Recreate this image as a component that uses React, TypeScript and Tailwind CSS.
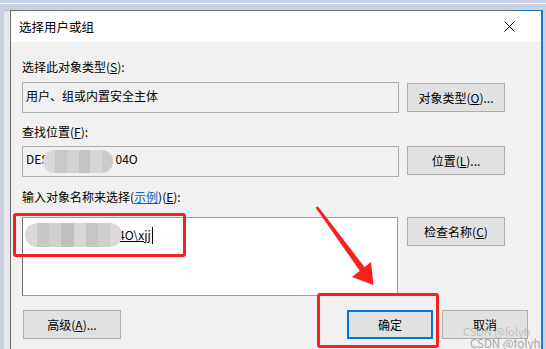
import React from "react";

const shades1 = ["#d8d8d8", "#c9c9c9", "#d2d2d2", "#c4c4c4", "#d6d6d6", "#cbcbcb"];
const shades2 = ["#d9d9d9", "#c8c8c8", "#d0d0d0", "#bfbfbf", "#d7d7d7", "#c5c5c5", "#cfcfcf", "#dadada"];

function Blur1() {
  return (
    <div className="flex h-[23px] w-[70px] overflow-hidden rounded-full blur-[0.6px]">
      {shades1.map((c, i) => (
        <div key={i} className="h-full flex-1" style={{ background: c }} />
      ))}
    </div>
  );
}

function Blur2() {
  return (
    <div className="flex h-[24px] w-[97px] overflow-hidden rounded-full blur-[0.6px]">
      {shades2.map((c, i) => (
        <div key={i} className="h-full flex-1" style={{ background: c }} />
      ))}
    </div>
  );
}

function Btn({ children, className = "" }: { children: React.ReactNode; className?: string }) {
  return (
    <div
      className={
        "flex h-[29px] items-center justify-center border border-[#adadad] bg-[#e1e1e1] text-[12px] text-black " +
        className
      }
    >
      {children}
    </div>
  );
}

export default function App() {
  return (
    <div className="relative h-[349px] w-[546px] overflow-hidden bg-[#c9d2e2] font-['Noto_Sans_CJK_SC','Microsoft_YaHei',sans-serif] text-[12px] leading-[16px] text-black">
      <div className="h-[3px]" />
      <div className="h-px bg-[#eef1f7]" />
      <div className="h-[6px]" />
      <div className="flex h-[339px]">
        <div className="w-[4px]" />
        <div className="w-[6px] border-t border-[#b4b8c0] bg-[#e6e7ea]" />
        <div className="relative flex w-[533px] flex-col border-l border-t border-[#6b6b6b] border-r-2 border-r-[#1979ca] bg-[#f0f0f0]">
          {/* title bar */}
          <div className="flex h-[31px] items-center justify-between bg-white pl-[8px] pr-[26px]">
            <span className="text-[12.5px] text-black">选择用户或组</span>
            <svg width="11" height="11" viewBox="0 0 11 11">
              <path d="M0.5 0.5 L10.5 10.5 M10.5 0.5 L0.5 10.5" stroke="#000" strokeWidth="1" />
            </svg>
          </div>
          {/* body */}
          <div className="flex flex-col pl-[11px]">
            <div className="mt-[17px] h-[16px]">
              选择此对象类型(<u>S</u>):
            </div>
            <div className="mt-[7px] flex items-start">
              <div className="h-[31px] w-[377px] border border-[#adadad] bg-[#f0f0f0] pl-[3px] pt-[5px]">
                用户、组或内置安全主体
              </div>
              <Btn className="ml-[8px] mt-[1px] w-[98px]">
                对象类型(<u>O</u>)...
              </Btn>
            </div>

            <div className="mt-[11px] h-[16px]">
              查找位置(<u>F</u>):
            </div>
            <div className="mt-[6px] flex items-start">
              <div className="flex h-[31px] w-[377px] items-center border border-[#adadad] bg-[#f0f0f0] pl-[3px]">
                <span className="-mt-[6px]">DES</span>
                <div className="-ml-[5px]">
                  <Blur1 />
                </div>
                <span className="-mt-[6px] ml-[2px]">04O</span>
              </div>
              <Btn className="ml-[8px] w-[98px]">
                位置(<u>L</u>)...
              </Btn>
            </div>

            <div className="mt-[12px] h-[16px]">
              输入对象名称来选择(<span className="text-[#0066cc] underline">示例</span>)(<u>E</u>):
            </div>
            <div className="mt-[12px] flex items-start">
              <div className="h-[79px] w-[376px] border border-[#a0a0a0] border-l-[#6f6f6f] bg-white pl-[2px] pt-[5px]">
                <div className="flex items-center">
                  <Blur2 />
                  <span className="-ml-[4px] underline">4O\xjj</span>
                  <div className="ml-[1px] h-[17px] w-px bg-black" />
                </div>
              </div>
              <Btn className="ml-[9px] w-[98px]">
                检查名称(<u>C</u>)
              </Btn>
            </div>

            <div className="mt-[14px] flex items-start">
              <Btn className="ml-[1px] w-[98px]">
                高级(<u>A</u>)...
              </Btn>
              <div className="ml-[226px] flex h-[29px] w-[86px] items-center justify-center border-2 border-[#0078d7] bg-[#e1e1e1]">
                确定
              </div>
              <Btn className="ml-[9px] w-[86px]">取消</Btn>
            </div>
          </div>
          {/* blue top-right corner segment */}
          <div className="absolute -top-px right-[-2px] h-px w-[27px] bg-[#1979ca]" />
        </div>
      </div>

      {/* red annotation boxes */}
      <div className="absolute left-[13px] top-[213px] h-[44px] w-[173px] rounded-[3px] border-[3px] border-[#f5201f]" />
      <div className="absolute left-[317px] top-[293px] h-[55px] w-[122px] rounded-[3px] border-[3px] border-[#f5201f]" />

      {/* arrow */}
      <svg className="pointer-events-none absolute left-0 top-0" width="546" height="349" viewBox="0 0 546 349">
        <polygon points="315.5,207.5 318,206.5 366,269 361,272.5" fill="#f5221b" />
        <polygon points="352,277 371,262 373.5,285" fill="#f5221b" />
      </svg>

      {/* watermark */}
      <div className="pointer-events-none absolute left-[463px] top-[326px] text-[11px] leading-[11px] text-[#b0b0b0]/70">
        CSDN @folyh
      </div>
      <div className="pointer-events-none absolute left-[470px] top-[337px] text-[11.5px] leading-[12px] text-[#a8a8a8]">
        CSDN @folyh
      </div>
    </div>
  );
}
